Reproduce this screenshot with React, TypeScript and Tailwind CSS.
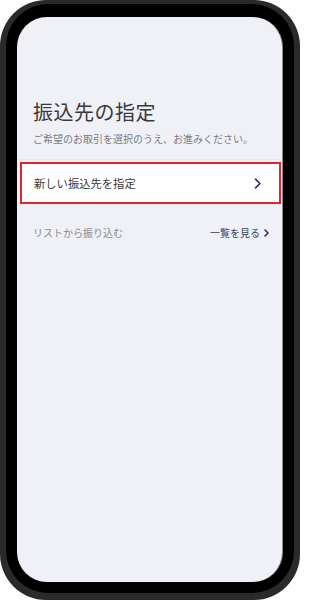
export default function App() {
  return (
    <div className="w-[300px] h-[600px] bg-white overflow-hidden" style={{ fontFamily: '"Noto Sans CJK JP", "Noto Sans", sans-serif' }}>
      {/* phone frame */}
      <div className="w-full h-full rounded-[46px] bg-[#2a2a2a] pt-[4px] px-[6px] pb-[7px]">
        <div className="w-full h-full rounded-[42px] bg-black pt-[13px] px-[11px] pb-[11px]">
          <div className="w-full h-full rounded-[30px] bg-[#f0f1f6] overflow-hidden border-r border-[#8a8a90]">
            <div className="pt-[81px]">
              <h1 className="px-[16px] text-[20px] leading-[28px] text-[#3a3a3a] tracking-[0.5px]">振込先の指定</h1>
              <p className="px-[16px] mt-[6px] text-[10px] leading-[14px] text-[#7a7a80]">
                ご希望のお取引を選択のうえ、お進みください。
              </p>

              <div className="mt-[13px] border-t border-[#e6e7ec]">
                <div className="mt-[2px] ml-[3px] mr-[1px] h-[42px] bg-white border-2 border-[#e0262c] flex items-center justify-between pl-[12px] pr-[17px]">
                  <span className="text-[11.3px] text-[#3a3a3a]">新しい振込先を指定</span>
                  <svg width="8" height="11" viewBox="0 0 8 11" fill="none">
                    <path d="M1.5 1.2 L6 5.5 L1.5 9.8" stroke="#2d3158" strokeWidth="1.6" strokeLinecap="round" strokeLinejoin="round" />
                  </svg>
                </div>
              </div>

              <div className="mt-[21px] px-[16px] pr-[13px] flex items-center justify-between">
                <span className="text-[10px] text-[#8a8a90]">リストから振り込む</span>
                <span className="flex items-center gap-[4px] text-[10px] text-[#3b3f5e]">
                  一覧を見る
                  <svg width="5" height="8" viewBox="0 0 5 8" fill="none">
                    <path d="M1 1 L4 4 L1 7" stroke="#2d3158" strokeWidth="1.6" strokeLinecap="round" strokeLinejoin="round" />
                  </svg>
                </span>
              </div>
            </div>
          </div>
        </div>
      </div>
    </div>
  );
}
